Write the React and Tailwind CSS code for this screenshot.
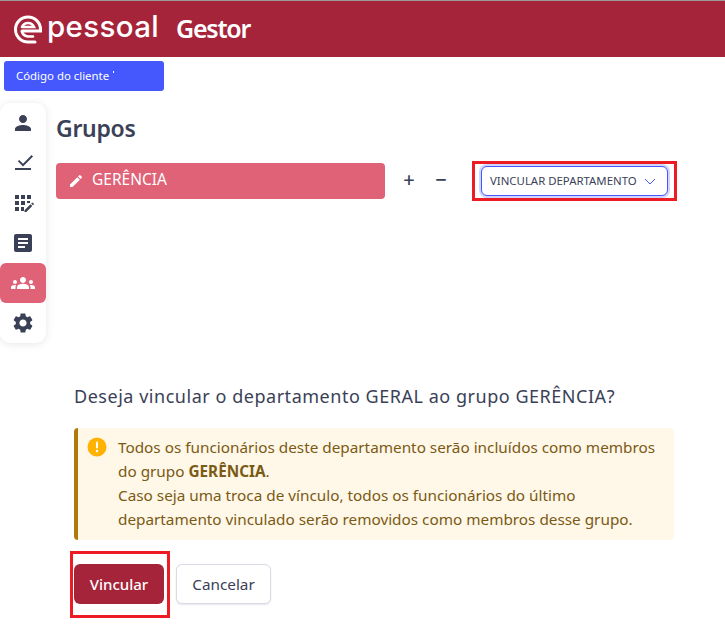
import React from "react";

const I = ({ d, s = 24, c = "#3a4157" }) => (
  <svg width={s} height={s} viewBox="0 0 24 24" fill={c}><path d={d} /></svg>
);

const icons = {
  person: "M12 12c2.21 0 4-1.79 4-4s-1.79-4-4-4-4 1.79-4 4 1.79 4 4 4zm0 2c-2.67 0-8 1.34-8 4v2h16v-2c0-2.66-5.33-4-8-4z",
  task: "M22 5.5l-1.41-1.41L12 12.67l-3.75-3.75-1.41 1.41L12 15.5 22 5.5zM4 19h16v-2H4v2z",
  article: "M19 3H5c-1.1 0-2 .9-2 2v14c0 1.1.9 2 2 2h14c1.1 0 2-.9 2-2V5c0-1.1-.9-2-2-2zm-5 14H7v-2h7v2zm3-4H7v-2h10v2zm0-4H7V7h10v2z",
  groups: "M12 12.75c1.63 0 3.07.39 4.24.9 1.08.48 1.76 1.56 1.76 2.73V18H6v-1.61c0-1.18.68-2.26 1.76-2.73 1.17-.52 2.61-.91 4.24-.91zM4 13c1.1 0 2-.9 2-2s-.9-2-2-2-2 .9-2 2 .9 2 2 2zm1.13 1.1C4.76 14.04 4.39 14 4 14c-.99 0-1.93.21-2.78.58C.48 14.9 0 15.62 0 16.43V18h4.5v-1.61c0-.83.23-1.61.63-2.29zM20 13c1.1 0 2-.9 2-2s-.9-2-2-2-2 .9-2 2 .9 2 2 2zm4 3.43c0-.81-.48-1.53-1.22-1.85-.85-.37-1.79-.58-2.78-.58-.39 0-.76.04-1.13.1.4.68.63 1.46.63 2.29V18H24v-1.57zM12 6c1.66 0 3 1.34 3 3s-1.34 3-3 3-3-1.34-3-3 1.34-3 3-3z",
  gear: "M19.14 12.94c.04-.3.06-.61.06-.94 0-.32-.02-.64-.07-.94l2.03-1.58c.18-.14.23-.41.12-.61l-1.92-3.32c-.12-.22-.37-.29-.59-.22l-2.39.96c-.5-.38-1.03-.7-1.62-.94l-.36-2.54c-.04-.24-.24-.41-.48-.41h-3.84c-.24 0-.43.17-.47.41l-.36 2.54c-.59.24-1.13.57-1.62.94l-2.39-.96c-.22-.08-.47 0-.59.22L2.74 8.87c-.12.21-.08.47.12.61l2.03 1.58c-.05.3-.09.63-.09.94s.02.64.07.94l-2.03 1.58c-.18.14-.23.41-.12.61l1.92 3.32c.12.22.37.29.59.22l2.39-.96c.5.38 1.03.7 1.62.94l.36 2.54c.05.24.24.41.48.41h3.84c.24 0 .44-.17.47-.41l.36-2.54c.59-.24 1.13-.56 1.62-.94l2.39.96c.22.08.47 0 .59-.22l1.92-3.32c.12-.22.07-.47-.12-.61l-2.01-1.58zM12 15.6c-1.98 0-3.6-1.62-3.6-3.6s1.62-3.6 3.6-3.6 3.6 1.62 3.6 3.6-1.62 3.6-3.6 3.6z",
  pencil: "M3 17.25V21h3.75L17.81 9.94l-3.75-3.75L3 17.25zM20.71 7.04c.39-.39.39-1.02 0-1.41l-2.34-2.34c-.39-.39-1.02-.39-1.41 0l-1.83 1.83 3.75 3.75 1.83-1.83z",
};

const Grid = () => (
  <svg width="24" height="24" viewBox="0 0 24 24" fill="#3a4157">
    <path d="M4 4h4v4H4zM10 4h4v4h-4zM16 4h4v4h-4zM4 10h4v4H4zM10 10h4v4h-4zM4 16h4v4H4zM10 16h3v4h-3zM16 10h3v2h-3z" />
    <path d="M13.5 21v-1.8l6-6 1.8 1.8-6 6zM20.2 12.5l.8-.8a.5.5 0 0 1 .7 0l1.1 1.1a.5.5 0 0 1 0 .7l-.8.8z" />
  </svg>
);

const Logo = () => (
  <svg width="28" height="30" viewBox="0 0 28 30" fill="none" stroke="#fff" strokeWidth="3" strokeLinecap="round">
    <path d="M21 28 H14 A12.5 12.5 0 1 1 26.5 15.5 V17 H8" />
    <path d="M8 13 A6.5 6.5 0 0 1 20 13 H8" strokeWidth="2.6" />
    <path d="M8 18 A7 7 0 0 0 14 22.5 H19" strokeWidth="2.6" />
  </svg>
);

export default function App() {
  const font = { fontFamily: '"Noto Sans", sans-serif' };
  return (
    <div style={font} className="w-[725px] h-[629px] bg-white overflow-hidden text-[#3a4157]">
      <header className="h-[57px] bg-[#a6243a] border-t border-[#9a9a9a] flex items-center pl-[14px] pb-[1px]">
        <Logo />
        <span className="ml-[5px] text-white text-[29.5px] leading-none font-['Inter',sans-serif] font-medium tracking-[0.35px] mt-[-4px]">pessoal</span>
        <span className="ml-[17px] text-white text-[25px] leading-none font-semibold tracking-[-1.25px]">Gestor</span>
      </header>
      <div className="mt-[4px] ml-[4px] w-[160px] h-[30px] rounded-[3px] bg-[#4458fe] text-white text-[11.4px] flex items-center pl-[12px]">
        Código do cliente
        <span className="ml-[4px] mt-[-8px] w-[1px] h-[2px] bg-white" />
      </div>
      <div className="flex mt-[12px]">
        <nav className="w-[46px] h-[240px] shrink-0 rounded-[10px] bg-white shadow-[0_1px_8px_rgba(0,0,0,0.1)] flex flex-col">
          {[
            <I d={icons.person} />,
            <I d={icons.task} />,
            <Grid />,
            <I d={icons.article} />,
            <I d={icons.groups} c="#fff" />,
            <I d={icons.gear} />,
          ].map((ic, i) => (
            <div key={i} className={`h-[40px] flex items-center justify-center ${i === 4 ? "bg-[#e06277] rounded-[6px]" : ""}`}>
              {ic}
            </div>
          ))}
        </nav>
        <main className="ml-[10px] flex-1">
          <h1 className="text-[23px] leading-[32px] font-semibold mt-[9px] tracking-[-0.3px]">Grupos</h1>
          <div className="flex items-center mt-[17px] h-[40px]">
            <div className="w-[329px] h-[36px] bg-[#e06277] rounded-[4px] flex items-center pl-[12px] text-white text-[15.5px]">
              <I d={icons.pencil} s={16} c="#fff" />
              <span className="ml-[8px] mt-[-2px]">GERÊNCIA</span>
            </div>
            <span className="ml-[18px] mt-[-3px] w-[12px] text-center text-[20px] leading-none font-medium">+</span>
            <span className="ml-[20px] mt-[-3px] w-[12px] text-center text-[20px] leading-none font-medium">−</span>
            <div className="ml-[25px] w-[205px] h-[40px] border-[3px] border-[#ed1c24] flex items-center justify-center">
              <div className="w-[187px] h-[30px] bg-white border border-[#4458fe] rounded-[6px] shadow-[0_0_0_2px_rgba(68,88,254,0.25)] flex items-center justify-between pl-[8px] pr-[11px] text-[11.4px] whitespace-nowrap">
                <span>VINCULAR DEPARTAMENTO</span>
                <svg width="12" height="7" viewBox="0 0 12 7" fill="none" stroke="#4458fe" strokeWidth="1">
                  <path d="M1 1l5 5 5-5" />
                </svg>
              </div>
            </div>
          </div>
        </main>
      </div>
      <section className="ml-[74px] w-[600px] mt-[-2px]">
        <p className="mt-[42px] text-[18px] leading-[26px] tracking-[0.53px]">
          Deseja vincular o departamento GERAL ao grupo GERÊNCIA?
        </p>
        <div className="mt-[19px] h-[112px] bg-[#fff7e8] border-l-[4px] border-[#b07a0a] rounded-[4px] flex pl-[9px] pt-[7px] text-[#7a5a14] text-[15.3px] leading-[24px] whitespace-nowrap">
          <svg className="mt-[2px] shrink-0" width="20" height="20" viewBox="0 0 20 20">
            <circle cx="10" cy="10" r="9.5" fill="#ffb300" />
            <rect x="9" y="4.5" width="2" height="7" rx="1" fill="#fff" />
            <circle cx="10" cy="14" r="1.2" fill="#fff" />
          </svg>
          <div className="ml-[11px]">
            Todos os funcionários deste departamento serão incluídos como membros
            <br />
            do grupo <b className="font-bold">GERÊNCIA</b>.
            <br />
            Caso seja uma troca de vínculo, todos os funcionários do último
            <br />
            departamento vinculado serão removidos como membros desse grupo.
          </div>
        </div>
        <div className="flex mt-[11px] ml-[-4px] items-start">
          <div className="w-[100px] h-[67px] border-[3px] border-[#ed1c24] pl-[1px] pt-[10px]">
            <button className="w-[90px] h-[40px] bg-[#a6243a] rounded-[6px] text-white text-[15px] font-medium">Vincular</button>
          </div>
          <button className="ml-[6px] mt-[13px] w-[95px] h-[40px] bg-white border border-[#d9dbe6] rounded-[6px] shadow-[0_1px_2px_rgba(0,0,0,0.1)] text-[15.3px]">Cancelar</button>
        </div>
      </section>
    </div>
  );
}
